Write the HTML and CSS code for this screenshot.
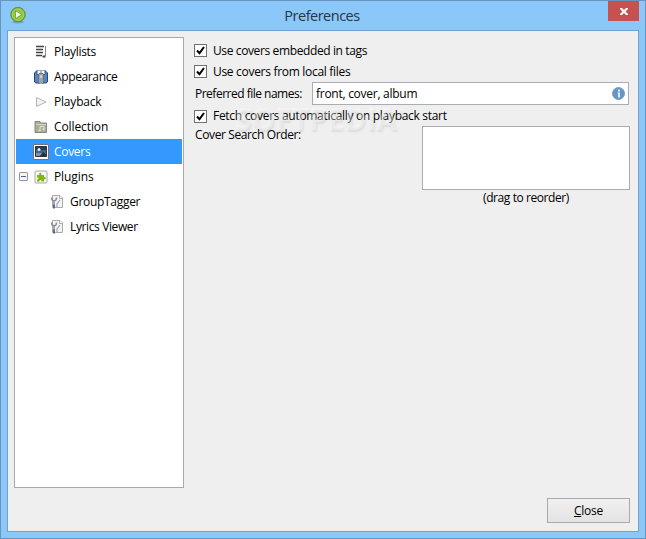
FILE: index.html
```html
<!DOCTYPE html>
<html lang="en">
<head>
<meta charset="utf-8">
<title>Preferences</title>
<link rel="stylesheet" href="styles.css">
</head>
<body>
<div class="window">
  <header class="titlebar">
    <svg class="app-icon" viewBox="0 0 16 17"><ellipse cx="8" cy="15" rx="6" ry="1.5" fill="#5580a5" opacity=".5"/><circle cx="8" cy="7.6" r="7.300" fill="#72ad25" stroke="#5d8a2a" stroke-width=".8"/><circle cx="8" cy="7.6" r="5.8" fill="#91c846" stroke="#b8df78" stroke-width=".7"/><path d="M5.500 3.700v7.900l6.300-4z" fill="#f1f8e8" stroke="#5f9426" stroke-width=".7"/></svg>
    <h1 class="title">Preferences</h1>
    <button class="close-x" aria-label="Close window"><svg viewBox="0 0 8 7"><path d="M0 0h2l2 2 2-2h2v1L5.5 3.5 8 6v1H6L4 5 2 7H0V6l2.500-2.500L0 1z" fill="#fff"/></svg></button>
  </header>
  <main class="client">
    <div class="panes">
      <nav class="tree">
        <div class="row"><svg class="icon" viewBox="0 0 14 14"><path d="M2 1.500h8M2 4.500h7M2 7.500h7M2 10.500h6" stroke="#444" stroke-width="1.700"/><path d="M11.500 1v10" stroke="#888"/><path d="M8.500 11.500h3" stroke="#444" stroke-width="2"/></svg><span class="t-playlists">Playlists</span></div>
        <div class="row"><svg class="icon" viewBox="0 0 14 14"><path d="M2.500 1h9l2 2v9l-1.500 1H2L.5 12V3z" fill="#5a84bf" stroke="#294975"/><path d="M3 0h8v4.500H3z" fill="#f3f6fa" stroke="#304c78" stroke-width=".8"/><path d="M5 3.500h4V14H5z" fill="#cdcdcd" stroke="#66686d" stroke-width=".8"/><path d="M7 1v4M7 8v5" stroke="#55585f" stroke-width=".8"/></svg><span class="t-appearance">Appearance</span></div>
        <div class="row"><svg class="icon" viewBox="0 0 14 14"><path d="M2.500 2.500v9l9.500-4.500z" fill="#f2f2f2" stroke="#b4b4b4"/></svg><span class="t-playback">Playback</span></div>
        <div class="row"><svg class="icon" viewBox="0 0 14 14"><path d="M1 12.500v-11h5l1 1.500h5.500v9.500z" fill="#a9ae99" stroke="#858a78"/><path d="M2 4.500h10" stroke="#d3d6c9"/><path d="M6 10.500v-4h4v3" fill="none" stroke="#dfe1d7"/><path d="M4.500 10.500h2M8.500 9.500h2" stroke="#dfe1d7" stroke-width="1.500"/></svg><span class="t-collection">Collection</span></div>
        <div class="row selected"><svg class="icon wide" viewBox="0 0 16 16"><path d="M.5.5h15v15H.5z" fill="#fff" stroke="#77746f"/><path d="M2.500 2.500h11v10h-11z" fill="#1e3d67" stroke="#333"/><path d="M3 9h10v3H3z" fill="#8093ac"/><path d="M3 6h10v3H3z" fill="#44628b"/><path d="m7 12 3-4 3 2v2z" fill="#27303b"/><circle cx="6" cy="5.500" r="1.500" fill="#eeeee3"/></svg><span class="t-covers">Covers</span></div>
        <div class="row parent"><span class="expander"></span><svg class="icon" viewBox="0 0 14 14"><rect x="1" y="1" width="12" height="12" rx="1" fill="#f6f6f6" stroke="#aaa"/><path d="M3 5h2.500C4 2.500 8 1.700 7.300 5H10v2c2.500-.6 2.500 3 0 2.300V11.500H7.500c.5-2-2.500-2-2 0H3V9.500c2 .3 2-2.300 0-2z" fill="#7db90b"/></svg><span class="t-plugins">Plugins</span></div>
        <div class="row child"><svg class="icon" viewBox="0 0 14 14"><use href="#tool"/></svg><span class="t-group">GroupTagger</span></div>
        <div class="row child"><svg class="icon" viewBox="0 0 14 14"><g id="tool"><path d="M2.500.5H10L12.500 3v9.500h-10z" fill="#f3f3f3" stroke="#aaa"/><path d="M9.500.5v3h3" fill="#fff" stroke="#999" stroke-width=".8"/><path d="M1.500 2.500c0 2 1 3.300 2.500 3.500V13M6.500 2.500c0 2-1 3.300-2.500 3.500" fill="none" stroke="#858c94" stroke-width="1.400"/><path d="m10 5-3 4v3" fill="none" stroke="#a0a6ac" stroke-width="1.200"/><path d="M4 9.500v4" stroke="#4e6987" stroke-width="1.800"/></g></svg><span class="t-lyrics">Lyrics Viewer</span></div>
      </nav>
      <section class="settings">
        <label class="check first"><span class="box"><svg viewBox="0 0 11 11"><path d="m2 5.500 2.500 2.700L9 2" /></svg></span><span class="t-tags">Use covers embedded in tags</span></label>
        <label class="check second"><span class="box"><svg viewBox="0 0 11 11"><path d="m2 5.500 2.500 2.700L9 2" /></svg></span><span class="t-files">Use covers from local files</span></label>
        <div class="field"><span class="field-label t-names">Preferred file names:</span><div class="input"><span class="t-input">front, cover, album</span><svg class="info" viewBox="0 0 13 13"><circle cx="6.500" cy="6.500" r="6" fill="#6595c9" stroke="#7a9cc1"/><path d="M6 2.500h2v2H6zM5.500 5.500H8v5H6v-4h-.5z" fill="#e3edf6"/></svg></div></div>
        <label class="check third"><span class="box"><svg viewBox="0 0 11 11"><path d="m2 5.500 2.500 2.700L9 2" /></svg></span><span class="t-fetch">Fetch covers automatically on playback start</span><span class="watermark">SOFTPEDIA<sup>®</sup></span></label>
        <div class="order"><span class="order-label t-order">Cover Search Order:</span><div class="order-side"><div class="list"></div><span class="hint t-hint">(drag to reorder)</span></div></div>
      </section>
    </div>
    <footer class="actions"><button class="close"><span class="t-close"><u>C</u>lose</span></button></footer>
  </main>
</div>
</body>
</html>
```
FILE: styles.css
```css
* { box-sizing: border-box; }
body { margin: 0; font: 12px/18px "Open Sans", "Noto Sans", sans-serif; color: #000; }
span { white-space: nowrap; }
.window { width: 646px; height: 539px; border: 1px solid #6994bd; background: #8cc7fa; display: flex; flex-direction: column; padding: 0 6px 6px; }
.titlebar { height: 29px; display: grid; grid-template-columns: 100px 1fr 100px; }
.app-icon { width: 16px; height: 17px; margin: 6px 0 0 3px; }
.title { margin: 4px 2px 0 0; font-size: 14.5px; line-height: 21px; font-weight: 400; text-align: center; letter-spacing: -.5px; color: #263746; }
.close-x { width: 31px; height: 20px; justify-self: end; border: 0; padding: 0; background: #c75050; display: flex; align-items: center; justify-content: center; }
.close-x svg { width: 8px; height: 7px; }
.client { flex: 1; border: 1px solid #70a2d1; background: #efefef; padding: 6px; display: flex; flex-direction: column; }
.panes { display: flex; }
.tree { width: 170px; height: 451px; background: #fff; border: 1px solid #a7a9af; padding: 1px 1px 0; flex: none; }
.row { height: 25px; padding-left: 18px; display: flex; align-items: center; }
.icon { width: 14px; height: 14px; margin-right: 6px; flex: none; }
.wide { width: 16px; height: 16px; margin: 0 5px 0 -1px; }
.selected { background: #3399ff; color: #fff; }
.parent { padding-left: 3px; }
.expander { width: 9px; height: 9px; border: 1px solid #969696; border-radius: 1px; margin-right: 6px; background: linear-gradient(#4961a3, #4961a3) center / 5px 1px no-repeat, #f5f5f5; }
.child { padding-left: 34px; }
.settings { width: 434px; margin-left: 10px; padding-top: 4px; }
.check { display: flex; align-items: center; height: 18px; position: relative; }
.second { margin-top: 3px; }
.third { margin-top: 2px; }
.box { width: 13px; height: 13px; border: 1px solid #707070; background: #fff; margin-right: 6px; display: flex; }
.box svg { width: 11px; height: 11px; }
.box path { fill: none; stroke: #000; stroke-width: 2; }
.first > .t-tags, .second > .t-files { padding-top: 2px; }
.field { display: flex; align-items: center; height: 23px; margin-top: 2px; }
.field-label { width: 118px; padding-left: 1px; flex: none; }
.input { width: 317px; height: 23px; flex: none; border: 1px solid #aaacb3; background: #fff; padding: 0 3px; display: flex; align-items: center; justify-content: space-between; }
.info { width: 13px; height: 13px; }
.watermark { position: absolute; left: 41px; top: -4px; font: bold 30px/32px "Open Sans", sans-serif; letter-spacing: -.1px; color: rgba(255,255,255,.4); text-shadow: 1px 2px 2px rgba(0,0,0,.08); }
.watermark sup { font-size: 9px; line-height: 1; vertical-align: 14px; }
.order { display: flex; justify-content: space-between; }
.order-label { padding: 1px 0 0 1px; }
.order-side { width: 208px; display: flex; flex-direction: column; align-items: center; margin-top: 1px; margin-right: -2px; }
.list { width: 208px; height: 64px; border: 1px solid #aaacb3; background: #fff; }
.hint { margin-top: -1px; }
.actions { display: flex; justify-content: flex-end; padding-top: 10px; padding-right: 1px; }
.close { width: 83px; height: 25px; border: 1px solid #aaa; background: linear-gradient(#f0f0f0, #e3e3e3); padding: 0; font: inherit; color: #000; margin-right: 1px; }
.t-playlists, .t-covers, .t-files, .t-fetch, .t-group { letter-spacing: -.3px; }
.t-appearance { letter-spacing: -.37px; }
.t-playback { letter-spacing: -.2px; }
.t-collection, .t-plugins { letter-spacing: -.1px; }
.t-lyrics, .t-tags, .t-order { letter-spacing: -.38px; }
.t-names { letter-spacing: -.5px; }
.t-input { letter-spacing: -.27px; }
.t-hint { letter-spacing: -.42px; }
.t-close { letter-spacing: -.25px; }
```
